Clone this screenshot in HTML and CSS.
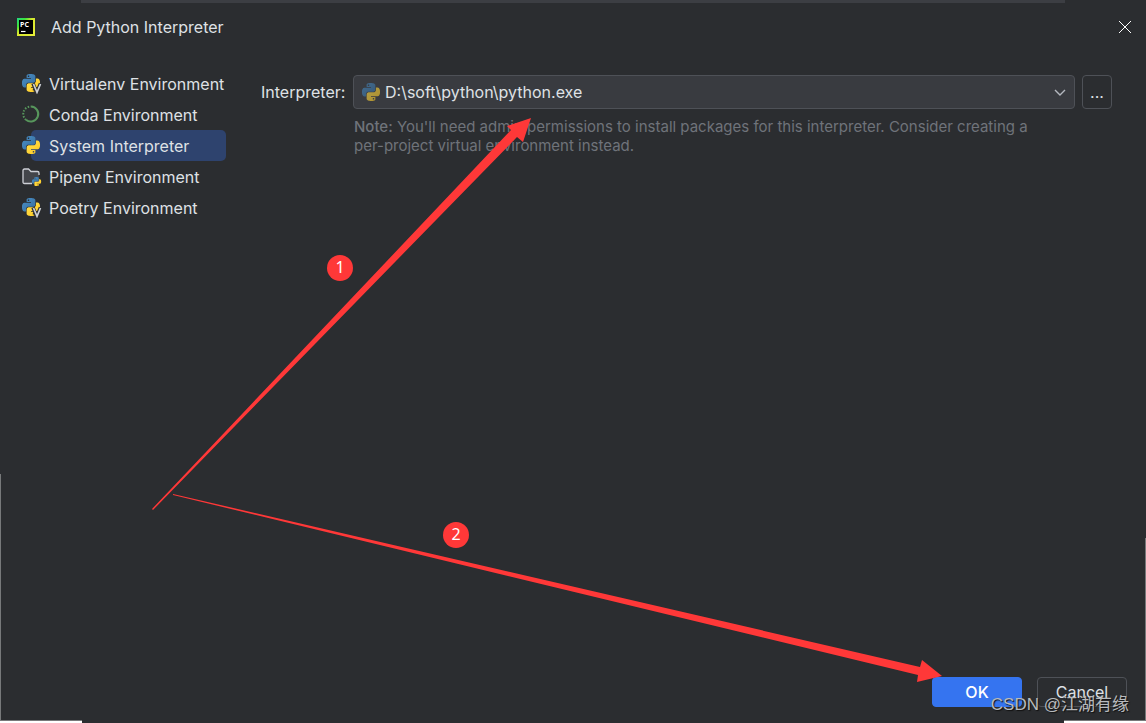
FILE: index.html
```
<!DOCTYPE html>
<html lang="en">
<head>
<meta charset="utf-8">
<title>Add Python Interpreter</title>
<link rel="stylesheet" href="styles.css">
</head>
<body>
<svg class="defs" aria-hidden="true">
  <defs>
    <linearGradient id="pc" x1="0" y1="0" x2="1" y2="1"><stop offset="0" stop-color="#21d789"/><stop offset=".25" stop-color="#3ee23a"/><stop offset=".45" stop-color="#d8e82e"/><stop offset="1" stop-color="#e8ee3a"/></linearGradient>
    <linearGradient id="blue" x1="0" y1="0" x2="1" y2="1"><stop offset="0" stop-color="#4a90c8"/><stop offset="1" stop-color="#366c9c"/></linearGradient>
    <linearGradient id="yellow" x1="1" y1="1" x2="0" y2="0"><stop offset="0" stop-color="#ffe052"/><stop offset="1" stop-color="#ffc91c"/></linearGradient>
    <path id="snake" d="M14.25.18l.9.2.73.26.59.3.45.32.34.34.25.34.16.33.1.3.04.26.02.2-.01.13V8.5l-.05.63-.13.55-.21.46-.26.38-.3.31-.33.25-.35.19-.35.14-.33.1-.3.07-.26.04-.21.02H8.77l-.69.05-.59.14-.5.22-.41.27-.33.32-.27.35-.2.36-.15.37-.1.35-.07.32-.04.27-.02.21v3.06H3.17l-.21-.03-.28-.07-.32-.12-.35-.18-.36-.26-.36-.36-.35-.46-.32-.59-.28-.73-.21-.88-.14-1.05-.05-1.23.06-1.22.16-1.04.24-.87.32-.71.36-.57.4-.44.42-.33.42-.24.4-.16.36-.1.32-.05.24-.01h.16l.06.01h8.16v-.83H6.18l-.01-2.75-.02-.37.05-.34.11-.31.17-.28.25-.26.31-.23.38-.2.44-.18.51-.15.58-.12.64-.1.71-.06.77-.04.84-.02 1.27.05zm-6.3 1.98l-.23.33-.08.41.08.41.23.34.33.22.41.09.41-.09.33-.22.23-.34.08-.41-.08-.41-.23-.33-.33-.22-.41-.09-.41.09z"/>
    <g id="python"><use href="#snake" fill="url(#blue)"/><use href="#snake" fill="url(#yellow)" transform="rotate(180 12 12)"/></g>
    <g id="venv"><use href="#python" transform="scale(.75)"/><path d="M11 9.500l3.700 9L18.500 9.500" fill="none" stroke="#2b2d30" stroke-width="3.500"/><path d="M11.500 10l3.500 8.300L18.500 10" fill="none" stroke="#ced0d6" stroke-width="1.700"/></g>
  </defs>
</svg>
<div class="dialog">
  <header class="titlebar">
    <svg class="app-icon" viewBox="0 0 18 18" aria-hidden="true"><rect width="18" height="18" fill="url(#pc)"/><rect x="2" y="2" width="14" height="14" fill="#000"/><text class="logo-text" x="3" y="9">PC</text><path d="M4 13.500h4.500" stroke="#fff" stroke-width="1.200"/></svg>
    <h1>Add Python Interpreter</h1>
    <button class="close" aria-label="Close"><svg viewBox="0 0 14 14" width="14" height="14"><path d="M1 1l12 12M13 1L1 13" stroke="#fff" stroke-width="1"/></svg></button>
  </header>
  <main class="content">
    <nav class="kinds" aria-label="Environment type">
      <button class="kind"><svg viewBox="0 0 20 20"><use href="#venv"/></svg><span>Virtualenv Environment</span></button>
      <button class="kind"><svg viewBox="0 0 20 20"><path d="M9 1.500A7.500 7.500 0 1 1 4 14.800" fill="none" stroke="#57965c" stroke-width="2"/><path d="M4 14.800A7.500 7.500 0 0 1 9 1.500" fill="none" stroke="#57965c" stroke-width="2" stroke-dasharray="1.500 1.500"/></svg><span>Conda Environment</span></button>
      <button class="kind selected" aria-current="true"><svg viewBox="0 0 20 20"><use href="#python" transform="scale(.75)"/></svg><span>System Interpreter</span></button>
      <button class="kind"><svg viewBox="0 0 20 20"><path d="M10 16.500H2.500Q1 16.500 1 15V3.500Q1 2 2.500 2H6.500L9 4.500H15.500Q17 4.500 17 6V8" fill="#43454a" stroke="#ced0d6" stroke-width="1.300"/><path d="M10 8h7v8h-7z" fill="#43454a"/><use href="#python" transform="translate(10 10) scale(.38)"/></svg><span>Pipenv Environment</span></button>
      <button class="kind"><svg viewBox="0 0 20 20"><use href="#venv"/></svg><span>Poetry Environment</span></button>
    </nav>
    <section class="settings">
      <label for="interpreter">Interpreter:</label>
      <div class="combo">
        <select id="interpreter" aria-describedby="note"><option>D:\soft\python\python.exe</option></select>
        <svg class="combo-icon" viewBox="0 0 24 24" aria-hidden="true"><use href="#python"/></svg>
        <svg class="chevron" viewBox="0 0 12 8" aria-hidden="true"><path d="M1 1l5 5 5-5" fill="none" stroke="#b4b8bf" stroke-width="1.400"/></svg>
      </div>
      <button class="browse" aria-label="Browse">...</button>
      <p id="note" class="note"><b>Note:</b> You'll need admin permissions to install packages for this interpreter. Consider creating a per-project virtual environment instead.</p>
    </section>
  </main>
  <footer class="actions"><button class="primary">OK</button><button>Cancel</button></footer>
  <i class="edge edge-top"></i><i class="edge edge-left"></i><i class="edge edge-right"></i><i class="edge edge-bottom-left"></i><i class="edge edge-bottom-right"></i>
  <svg class="arrows" width="1146" height="723" viewBox="0 0 1146 723" aria-hidden="true"><g fill="#ff3838"><path d="M152 509L511 130 507 126 531 118 523 142 517 137 153 510z"/><path d="M173 494L920 667 922 660 942 676 917 682 918 675 173 495z"/></g></svg>
  <span class="badge badge-one">1</span>
  <span class="badge badge-two">2</span>
  <span class="watermark">CSDN @江湖有缘</span>
</div>
</body>
</html>
```
FILE: styles.css
```
* { box-sizing: border-box; }
body { margin: 0; background: #2b2d30; color: #dfe1e5; font: 16px/20px Inter, "Noto Sans", sans-serif; font-optical-sizing: none; }
button, select { font: inherit; font-optical-sizing: none; color: inherit; }
.defs { position: absolute; width: 0; height: 0; }
.dialog { position: relative; min-height: 100vh; display: flex; flex-direction: column; overflow: hidden; }
.titlebar { display: flex; align-items: center; height: 54px; padding: 0 14px 0 17px; }
.app-icon { width: 18px; height: 18px; margin-right: 16px; }
.logo-text { font: bold 7px "Open Sans", sans-serif; fill: #fff; }
h1 { margin: 0; flex: 1; font-size: 16px; font-weight: 400; }
.close { display: flex; padding: 0; border: 0; background: none; }
.content { display: flex; flex: 1; align-items: flex-start; padding: 14px 34px 0 22px; }
.kinds { display: flex; flex-direction: column; width: 239px; flex: none; }
.kind { display: flex; align-items: center; gap: 7px; width: 204px; height: 31px; padding: 0; border: 0; background: none; white-space: nowrap; text-align: left; }
.kind svg { width: 20px; height: 20px; flex: none; }
.kind.selected { position: relative; z-index: 0; }
.kind.selected::before { content: ""; position: absolute; z-index: -1; inset: 0 0 0 9px; border-radius: 5px; background: #2e436e; }
.settings { flex: 1; display: grid; grid-template-columns: 85px 1fr 30px; column-gap: 7px; align-items: center; padding-top: 7px; }
.combo { position: relative; }
.combo select { display: block; width: 100%; height: 34px; padding: 0 32px 0 31px; appearance: none; border: 1px solid #4e5157; border-radius: 4px; background: #393b40; }
.combo-icon { position: absolute; left: 9px; top: 8px; width: 18px; height: 18px; opacity: .6; }
.chevron { position: absolute; right: 9px; top: 14px; width: 12px; height: 8px; }
.browse { height: 34px; padding: 0; border: 1px solid #4e5157; border-radius: 4px; background: none; }
.note { grid-column: 2; margin: 8px 0 0 1px; padding-right: 32px; color: #6f737a; font-size: 15px; line-height: 19px; }
.note b { font-weight: 500; }
.actions { display: flex; justify-content: flex-end; gap: 15px; padding: 0 19px 16px; }
.actions button { width: 90px; height: 30px; padding: 0; border: 1px solid #4e5157; border-radius: 4px; background: none; }
.actions .primary { background: #3574f0; border-color: #3574f0; color: #fff; font-weight: 500; }
.edge { position: absolute; }
.edge-top { top: 0; left: 81px; right: 81px; height: 3px; background: #3c3e43; }
.edge-left { left: 0; top: 474px; bottom: 2px; width: 1px; background: #77797a; }
.edge-right { right: 0; top: 538px; bottom: 2px; width: 1px; background: #77797a; }
.edge-bottom-left, .edge-bottom-right { bottom: 0; width: 82px; height: 3px; background: #fff; border-top: 1px solid #77797a; }
.edge-bottom-left { left: 0; }
.edge-bottom-right { right: 0; }
.arrows { position: absolute; left: 0; top: 0; pointer-events: none; }
.badge { position: absolute; width: 26px; height: 26px; border-radius: 50%; background: #ff3838; color: #fff; font: 16px/24px "Noto Sans", sans-serif; text-align: center; }
.badge-one { left: 327px; top: 255px; }
.badge-two { left: 443px; top: 522px; }
.watermark { position: absolute; right: 17px; bottom: 7px; color: #b8babd; font: 17px/22px "Liberation Sans", "Noto Sans CJK SC", sans-serif; text-shadow: 1px 1px 1px #111; white-space: nowrap; pointer-events: none; }
```
